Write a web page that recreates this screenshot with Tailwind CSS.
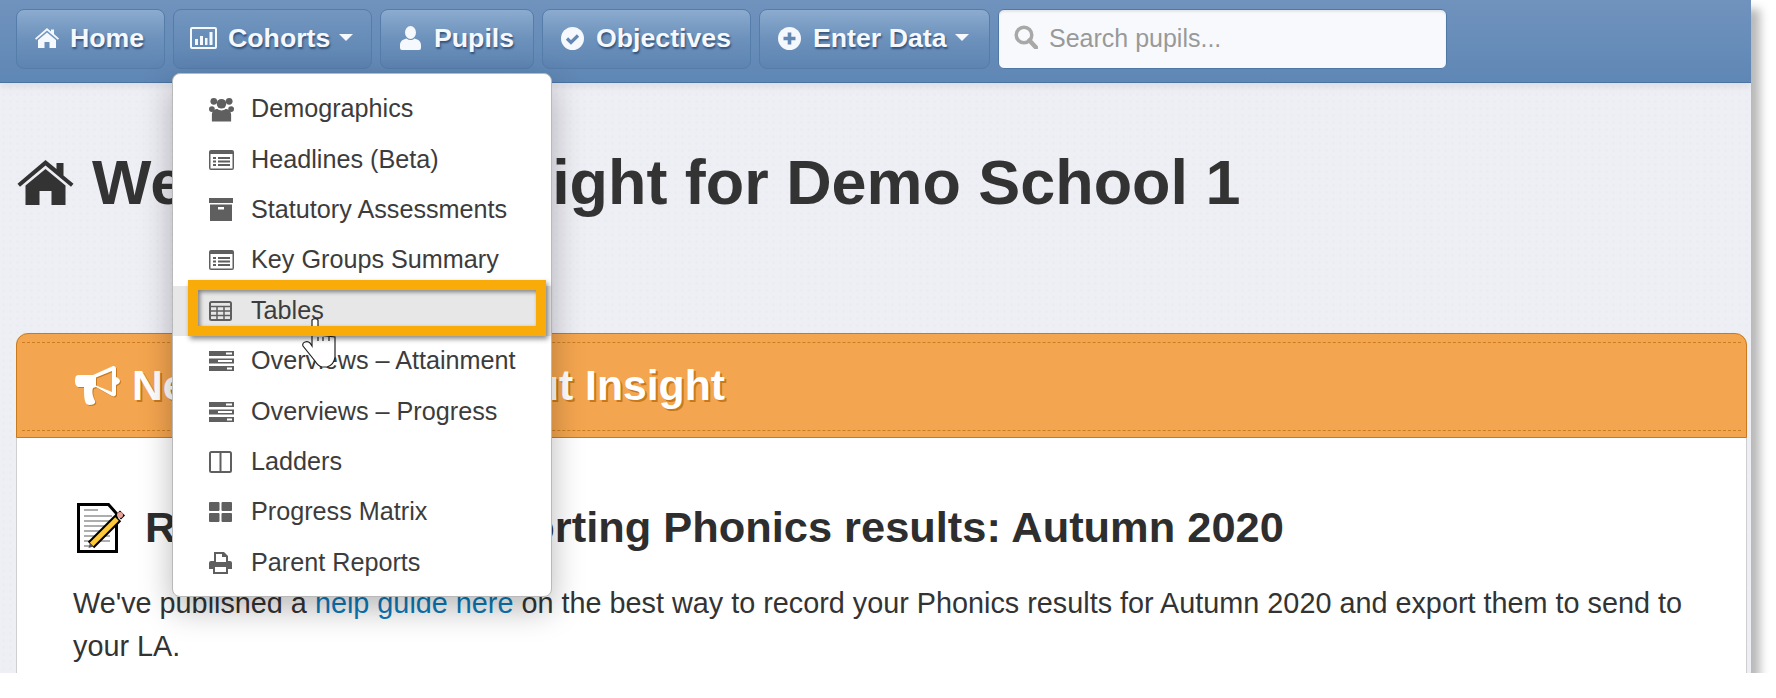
<!DOCTYPE html>
<html lang="en">
<head>
  <meta charset="UTF-8" />
  <title>Insight</title>
  <script src="https://cdn.jsdelivr.net/npm/@tailwindcss/browser@4"></script>
</head>
<body class="bg-white overflow-hidden font-['Liberation_Sans',Arial,sans-serif] text-[#333]">
  <svg class="hidden">
    <symbol id="ico-list" viewBox="0 0 25 20"><path fill-rule="evenodd" d="M2 0h21a2 2 0 0 1 2 2v16a2 2 0 0 1-2 2H2a2 2 0 0 1-2-2V2a2 2 0 0 1 2-2ZM1.500 4v14.500h22V4ZM4 7h3v2H4Zm5 0h12v2H9Zm-5 3.500h3v2H4Zm5 0h12v2H9ZM4 14h3v2H4Zm5 0h12v2H9Z"/></symbol>
    <symbol id="ico-tasks" viewBox="0 0 25 20"><path fill-rule="evenodd" d="M0 0h25v5H0Zm17 1.500v2h6v-2ZM0 7.500h25v5H0Zm9 1.500v2h14V9ZM0 15h25v5H0Zm18 1.500v2h5v-2Z"/></symbol>
  </svg>

  <!-- window -->
  <div class="relative w-[1751px] h-[673px] overflow-hidden bg-[#eeeef5] bg-[radial-gradient(#ebebf2_1px,transparent_1.500px)] bg-[length:7px_7px] shadow-[9px_9px_9px_rgba(0,0,0,0.28)]">

    <!-- navbar -->
    <nav class="flex items-start gap-[8px] h-[83px] pt-[9px] pl-[16px] border-b border-[#4b74a3] bg-gradient-to-b from-[#7093bd] to-[#5f87b5] shadow-[0_3px_8px_rgba(0,0,0,0.08)]">
      <a class="flex items-center w-[149px] h-[60px] pl-[18px] pb-[2px] gap-[11px] rounded-[8px] border border-[#557da9] bg-gradient-to-b from-[#8cabcf] via-[#6c91bb] to-[#5e84b2] text-[26.700px] font-bold text-[#f5f8fc] [text-shadow:1px_2px_2px_rgba(30,60,100,0.75)]">
        <svg class="w-[24px] h-[20px] fill-[#f5f8fc]" viewBox="0 0 24 20"><path d="M12 0 16 3.400V1.500h3v4.500l5 4.400-1.200 1.300L12 2.500 1.200 11.700 0 10.400Z"/><path d="M12 4.500 21 12v8h-6.500v-6h-5v6H3v-8Z"/></svg>
        Home
      </a>
      <a class="flex items-center w-[199px] h-[60px] pl-[16px] pb-[2px] gap-[11px] rounded-[8px] border border-[#557da9] bg-gradient-to-b from-[#7296bf] to-[#5c83b1] text-[26.700px] font-bold text-[#f5f8fc] [text-shadow:1px_2px_2px_rgba(30,60,100,0.75)]">
        <svg class="w-[27px] h-[22px]" viewBox="0 0 27 22"><rect x="1" y="1" width="25" height="20" rx="1" fill="none" stroke="#f5f8fc" stroke-width="2"/><path fill="#f5f8fc" d="M5 12h3v6H5Zm5-3h3v9h-3Zm5 2h2.500v7H15Zm4.500-6h3v13h-3Z"/></svg>
        <span class="flex items-center gap-[9px]">Cohorts <i class="block w-0 h-0 border-x-[7px] border-x-transparent border-t-[7px] border-t-[#f5f8fc]"></i></span>
      </a>
      <a class="flex items-center w-[154px] h-[60px] pl-[19px] pb-[2px] gap-[13px] rounded-[8px] border border-[#557da9] bg-gradient-to-b from-[#8cabcf] via-[#6c91bb] to-[#5e84b2] text-[26.700px] font-bold text-[#f5f8fc] [text-shadow:1px_2px_2px_rgba(30,60,100,0.75)]">
        <svg class="w-[21px] h-[24px] fill-[#f5f8fc]" viewBox="0 0 21 24"><ellipse cx="10.500" cy="6.500" rx="5.500" ry="6.500"/><path d="M6.500 12.500c2.500 2 5.500 2 8 0C18.500 13.500 21 15.500 21 19v3a2 2 0 0 1-2 2H2a2 2 0 0 1-2-2v-3c0-3.500 2.500-5.500 6.500-6.500Z"/></svg>
        Pupils
      </a>
      <a class="flex items-center w-[209px] h-[60px] pl-[18px] pb-[2px] gap-[12px] rounded-[8px] border border-[#557da9] bg-gradient-to-b from-[#8cabcf] via-[#6c91bb] to-[#5e84b2] text-[26.700px] font-bold text-[#f5f8fc] [text-shadow:1px_2px_2px_rgba(30,60,100,0.75)]">
        <svg class="w-[23px] h-[23px]" viewBox="0 0 23 23"><circle cx="11.500" cy="11.500" r="11.500" fill="#f5f8fc"/><path d="M6 11.500l4 4 7-7" fill="none" stroke="#6488b4" stroke-width="3.200"/></svg>
        Objectives
      </a>
      <a class="flex items-center w-[231px] h-[60px] pl-[18px] pb-[2px] gap-[12px] rounded-[8px] border border-[#557da9] bg-gradient-to-b from-[#8cabcf] via-[#6c91bb] to-[#5e84b2] text-[26.700px] font-bold text-[#f5f8fc] [text-shadow:1px_2px_2px_rgba(30,60,100,0.75)]">
        <svg class="w-[23px] h-[23px]" viewBox="0 0 23 23"><circle cx="11.500" cy="11.500" r="11.500" fill="#f5f8fc"/><path d="M11.500 5.500v12M5.500 11.500h12" stroke="#6488b4" stroke-width="3.600"/></svg>
        <span class="flex items-center gap-[9px]">Enter Data <i class="block w-0 h-0 border-x-[7px] border-x-transparent border-t-[7px] border-t-[#f5f8fc]"></i></span>
      </a>
      <div class="flex items-center w-[449px] h-[60px] pl-[15px] gap-[11px] rounded-[6px] bg-[#f8f9fd] border border-[#4f78a6] shadow-[inset_0_2px_2px_rgba(0,0,0,0.08)]">
        <svg class="w-[24px] h-[24px] -mt-[4px]" viewBox="0 0 24 24"><circle cx="10" cy="10" r="7.800" fill="none" stroke="#a8a8a8" stroke-width="3.500"/><path d="M15.500 15.500 22 22.500" stroke="#a8a8a8" stroke-width="4.500" stroke-linecap="round"/></svg>
        <span class="text-[25px] text-[#999]">Search pupils...</span>
      </div>
    </nav>

    <!-- page content -->
    <main class="pl-[16px] pr-[4px]">
      <div class="flex items-center gap-[18px] h-[250px] pb-[52px]">
        <svg class="ml-[1px] w-[57px] h-[45px] fill-[#333] shrink-0" viewBox="0 0 56 45"><path d="M28 0 39 9V3h7v12.500l10 8.300-2.500 3L28 5.500 2.500 26.800 0 23.800Z"/><path d="M28 9 48 25.500V45H34V31H22v14H8V25.500Z"/></svg>
        <h1 class="text-[62.900px] leading-none font-bold whitespace-nowrap">Welcome to Insight for Demo School 1</h1>
      </div>

      <section class="h-[340px] rounded-t-[12px] bg-white border-x border-[#cfcfcf]">
        <div class="relative -mx-px h-[105px] rounded-t-[12px] border border-[#c97a1c] bg-[#f4a54f] flex items-center pl-[58px] gap-[12px]">
          <div class="absolute left-[5px] right-[5px] top-[8px] bottom-[6px] border-y border-dashed border-[#cc7d1e]"></div>
          <svg class="w-[45px] h-[39px] drop-shadow-[1px_1px_0_#c9791c]" viewBox="0 0 45 39"><path fill="#fff" fill-rule="evenodd" d="M3 9H18L37 .500c2-1 4 0 4 2V11c2 1 4 2 4 4s-2 3-4 4v9c0 2-2 3-4 2L21 21l-3 1c-1 3-1 7 2 13 1 3-2 4-5 4-3 0-4-1-5-4-1-4-1-8-1-14H4c-2 0-4-2-4-6s1-6 3-6ZM21 11.500v8L37 26V5Z"/></svg>
          <h2 class="text-[42.700px] leading-none font-bold text-white whitespace-nowrap [text-shadow:2px_2px_0_#c9791c]">News &amp; reports about Insight</h2>
        </div>
        <div class="pl-[56px] pt-[65px] pr-[40px]">
          <div class="ml-[4px] flex items-center gap-[18px] h-[50px]">
            <svg class="w-[50px] h-[50px] shrink-0" viewBox="0 0 50 50">
              <path d="M1.500 1.500h30l8 9v38h-38Z" fill="#fff" stroke="#000" stroke-width="3"/>
              <path d="M7 7h14M7 13h28M7 18h26M7 23h28M7 28h24M7 33h26M7 38h26M7 43h8" stroke="#adadad" stroke-width="2.200"/>
              <path d="M14 42 41 15" stroke="#000" stroke-width="9"/>
              <path d="M43 7.500l5 5-4 4-5-5Z" fill="#000"/>
              <path d="M14.500 41.500 40 16" stroke="#fbc93a" stroke-width="5"/>
              <path d="M11.500 45l1.500-5 3.500 3.500Z" fill="#555"/>
              <circle cx="43" cy="12" r="3" fill="#e9a397"/>
            </svg>
            <h3 class="text-[43.400px] leading-none font-bold text-[#2e2e2e] whitespace-nowrap">Recording and reporting Phonics results: Autumn 2020</h3>
          </div>
          <p class="mt-[29px] text-[28.800px] leading-[43px] text-[#333]">We've published a <a class="text-[#0b7cbd]">help guide here</a> on the best way to record your Phonics results for Autumn 2020 and export them to send to your LA.</p>
        </div>
      </section>
    </main>

    <!-- dropdown menu -->
    <ul class="absolute left-[172px] top-[73px] w-[380px] h-[524px] pt-[10px] rounded-[8px] bg-white border border-[#b9b9b9] shadow-[0_12px_32px_rgba(0,0,0,0.28)] text-[25.200px] text-[#3c3c3c]">
      <li class="flex items-center h-[50.400px] pl-[36px] gap-[17px]">
        <svg class="w-[25px] h-[25px] fill-[#5f5f5f]" viewBox="0 0 26 25"><circle cx="5" cy="4" r="3.500"/><circle cx="21" cy="4" r="3.500"/><circle cx="13" cy="6.500" r="5"/><circle cx="3" cy="12" r="3"/><circle cx="23" cy="12" r="3"/><path d="M3 25v-7c0-4 3-6 6-6 2 2 6 2 8 0 3 0 6 2 6 6v7Z"/></svg>
        <span>Demographics</span>
      </li>
      <li class="flex items-center h-[50.400px] pl-[36px] gap-[17px]">
        <svg class="w-[25px] h-[20px] fill-[#5f5f5f]"><use href="#ico-list"/></svg>
        <span>Headlines (Beta)</span>
      </li>
      <li class="flex items-center h-[50.400px] pl-[36px] gap-[17px]">
        <svg class="w-[25px] h-[23px] fill-[#5f5f5f]" viewBox="0 0 25 23"><path fill-rule="evenodd" d="M0 0h24v5H0Zm1 6.500h22V23H1ZM9 9v2.500h6V9Z"/></svg>
        <span>Statutory Assessments</span>
      </li>
      <li class="flex items-center h-[50.400px] pl-[36px] gap-[17px]">
        <svg class="w-[25px] h-[20px] fill-[#5f5f5f]"><use href="#ico-list"/></svg>
        <span>Key Groups Summary</span>
      </li>
      <li class="flex items-center h-[50.400px] pl-[36px] gap-[19px] bg-[#e7e7e7]">
        <svg class="w-[23px] h-[20px]" viewBox="0 0 23 20"><rect x="1" y="1" width="21" height="18" rx="1.500" fill="none" stroke="#5f5f5f" stroke-width="2"/><path d="M1 5.500h21M1 10h21M1 14.500h21M8 5v14M15 5v14" stroke="#5f5f5f" stroke-width="1.500"/></svg>
        <span>Tables</span>
      </li>
      <li class="flex items-center h-[50.400px] pl-[36px] gap-[17px]">
        <svg class="w-[25px] h-[20px] fill-[#5f5f5f]"><use href="#ico-tasks"/></svg>
        <span>Overviews – Attainment</span>
      </li>
      <li class="flex items-center h-[50.400px] pl-[36px] gap-[17px]">
        <svg class="w-[25px] h-[20px] fill-[#5f5f5f]"><use href="#ico-tasks"/></svg>
        <span>Overviews – Progress</span>
      </li>
      <li class="flex items-center h-[50.400px] pl-[36px] gap-[19px]">
        <svg class="w-[23px] h-[22px]" viewBox="0 0 23 22"><rect x="1" y="1" width="21" height="20" rx="1.500" fill="none" stroke="#5f5f5f" stroke-width="2"/><path d="M11.500 1v20" stroke="#5f5f5f" stroke-width="2"/></svg>
        <span>Ladders</span>
      </li>
      <li class="flex items-center h-[50.400px] pl-[36px] gap-[19px]">
        <svg class="w-[23px] h-[20px] fill-[#5f5f5f]" viewBox="0 0 23 20"><rect width="10.500" height="9" rx="1"/><rect x="12.500" width="10.500" height="9" rx="1"/><rect y="11" width="10.500" height="9" rx="1"/><rect x="12.500" y="11" width="10.500" height="9" rx="1"/></svg>
        <span>Progress Matrix</span>
      </li>
      <li class="flex items-center h-[50.400px] pl-[36px] gap-[19px]">
        <svg class="w-[23px] h-[22px] fill-[#5f5f5f]" viewBox="0 0 23 22"><path fill-rule="evenodd" d="M5 0h10l4 4v5h2a2 2 0 0 1 2 2v6h-4v5H4v-5H0v-6a2 2 0 0 1 2-2h3Zm2 2v8h10V5h-4V2Zm-1 13v5h11v-5Z"/></svg>
        <span>Parent Reports</span>
      </li>
    </ul>

    <!-- mouse cursor, sits under the highlight box -->
    <svg class="absolute left-[302px] top-[317px] w-[36px] h-[52px]" viewBox="0 0 36 52">
      <path d="M10 3q3-3 6 0v15l17 2v20q-1 8-8 10h-5q-4-1-7-6L1 29q-1-3 2-4 3-1 5 1l2 3Z" fill="#fff" stroke="#222" stroke-width="1.200"/>
      <path d="M16 20v4M21 20v4M27 20v4" stroke="#222" stroke-width="1.200"/>
    </svg>

    <!-- tutorial highlight over the Tables row -->
    <div class="absolute left-[188px] top-[280px] w-[358px] h-[56px] border-[10px] border-[#f9ab0a] shadow-[2px_3px_5px_rgba(0,0,0,0.45),inset_2px_2px_4px_rgba(0,0,0,0.45)]"></div>
  </div>
</body>
</html>
